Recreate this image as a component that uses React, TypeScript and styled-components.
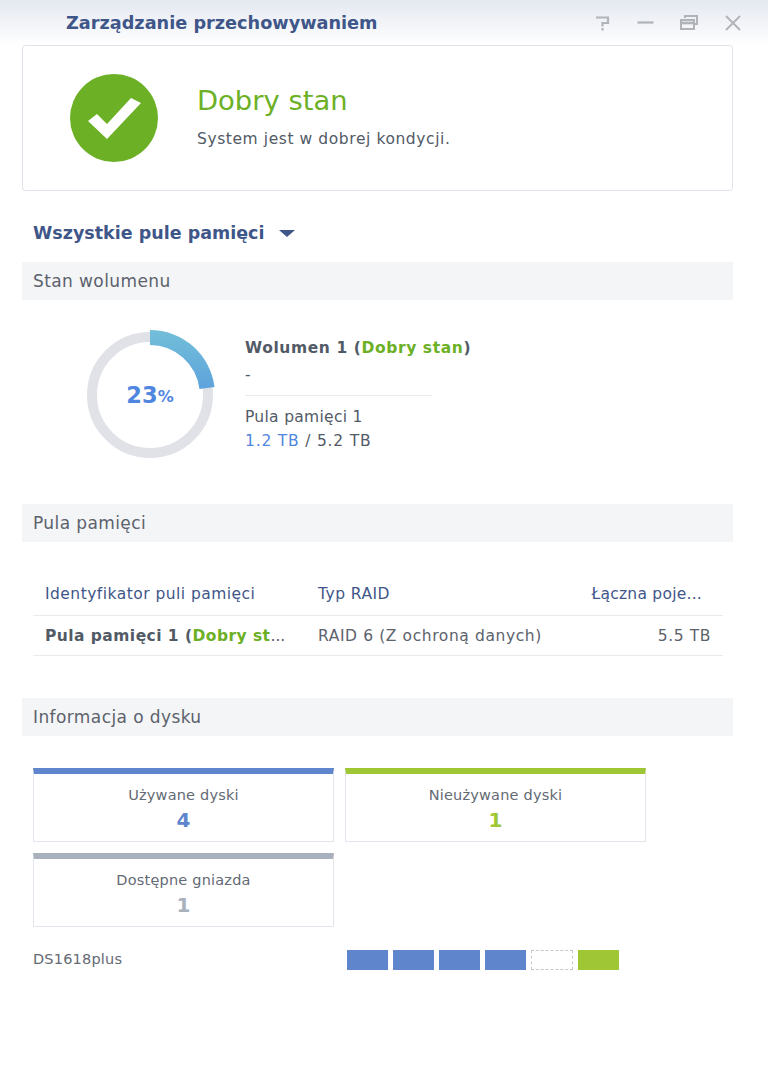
import styled, { createGlobalStyle } from 'styled-components';

const GlobalStyle = createGlobalStyle`
  html, body {
    margin: 0;
    padding: 0;
    background: #fff;
  }
  body {
    font-family: 'DejaVu Sans', Verdana, sans-serif;
    color: #525a66;
  }
`;

const drives = ['used', 'used', 'used', 'used', 'empty', 'free'] as const;

const colors = {
  blue: '#5f86cc',
  green: '#9fc634',
  gray: '#a9b1bd',
};

const App = () => {
  return (
    <Window>
      <GlobalStyle />
      <TitleBar>
        <AppTitle>Zarządzanie przechowywaniem</AppTitle>
        <WindowButtons>
          <svg width="18" height="18" viewBox="0 0 18 18" fill="none" stroke="#b0b3b8" strokeWidth="2.2">
            <path d="M4 3.5h12v5.5h-5.5v3.5" />
            <path d="M10.5 14v2.5" />
          </svg>
          <svg width="18" height="18" viewBox="0 0 18 18" fill="none" stroke="#b0b3b8" strokeWidth="2.2">
            <path d="M1.5 8.5h16" />
          </svg>
          <svg width="18" height="18" viewBox="0 0 18 18" fill="none" stroke="#b0b3b8" strokeWidth="2">
            <path d="M5 4V2h12v8h-3" />
            <path d="M1 6h13v9H1z" />
            <path d="M1 9h13" strokeWidth="2.6" />
          </svg>
          <svg width="18" height="18" viewBox="0 0 18 18" fill="none" stroke="#b0b3b8" strokeWidth="1.8">
            <path d="M2 2l14 14M16 2L2 16" />
          </svg>
        </WindowButtons>
      </TitleBar>

      <StatusCard>
        <svg width="88" height="88" viewBox="0 0 88 88">
          <circle cx="44" cy="44" r="44" fill="#6cb026" />
          <path d="M18 47l9-7 10 10 24-26 10 5-34 36z" fill="#fff" />
        </svg>
        <StatusText>
          <StatusTitle>Dobry stan</StatusTitle>
          <StatusNote>System jest w dobrej kondycji.</StatusNote>
        </StatusText>
      </StatusCard>

      <PoolSelect>
        Wszystkie pule pamięci
        <Caret />
      </PoolSelect>

      <SectionBar>Stan wolumenu</SectionBar>
      <VolumeRow>
        <Donut>
          <svg width="132" height="132" viewBox="0 0 132 132">
            <defs>
              <linearGradient id="arc" x1="0" y1="0" x2="0" y2="1">
                <stop offset="0" stopColor="#72bfd9" />
                <stop offset="1" stopColor="#5ea3dc" />
              </linearGradient>
            </defs>
            <circle cx="66" cy="66" r="58" fill="none" stroke="#e0e2e7" strokeWidth="10" />
            <path d="M66 1A65 65 0 0 1 130.5 58L115.5 60A50 50 0 0 0 66 16z" fill="url(#arc)" />
          </svg>
          <DonutLabel>
            23<small>%</small>
          </DonutLabel>
        </Donut>
        <VolumeInfo>
          <VolumeName>
            Wolumen 1 (<GreenText>Dobry stan</GreenText>)
          </VolumeName>
          <VolumeDash>-</VolumeDash>
          <VolumeDivider />
          <PoolLine>Pula pamięci 1</PoolLine>
          <UsageLine>
            <BlueText>1.2 TB</BlueText> / 5.2 TB
          </UsageLine>
        </VolumeInfo>
      </VolumeRow>

      <SectionBar>Pula pamięci</SectionBar>
      <PoolTable>
        <HeadRow>
          <span>Identyfikator puli pamięci</span>
          <span>Typ RAID</span>
          <CapacityHead>Łączna poje...</CapacityHead>
        </HeadRow>
        <BodyRow>
          <PoolName>
            Pula pamięci 1 (<GreenText>Dobry st</GreenText>
            <Dots>...</Dots>
          </PoolName>
          <span>RAID 6 (Z ochroną danych)</span>
          <CapacityCell>5.5 TB</CapacityCell>
        </BodyRow>
      </PoolTable>

      <SectionBar>Informacja o dysku</SectionBar>
      <DiskGrid>
        <DiskCard $color={colors.blue}>
          <DiskLabel>Używane dyski</DiskLabel>
          <DiskCount $color={colors.blue}>4</DiskCount>
        </DiskCard>
        <DiskCard $color={colors.green}>
          <DiskLabel>Nieużywane dyski</DiskLabel>
          <DiskCount $color={colors.green}>1</DiskCount>
        </DiskCard>
        <DiskCard $color={colors.gray}>
          <DiskLabel>Dostępne gniazda</DiskLabel>
          <DiskCount $color={colors.gray}>1</DiskCount>
        </DiskCard>
      </DiskGrid>

      <DeviceRow>
        <DeviceName>DS1618plus</DeviceName>
        <Bays>
          {drives.map((d, i) => (
            <Bay key={i} $kind={d} />
          ))}
        </Bays>
      </DeviceRow>
    </Window>
  );
};

export default App;

const Window = styled.div`
  width: 768px;
  height: 1089px;
  background: #fff;
  overflow: hidden;
`;

const TitleBar = styled.div`
  height: 45px;
  box-sizing: border-box;
  padding: 0 26px 0 66px;
  display: flex;
  align-items: center;
  justify-content: space-between;
  background: linear-gradient(#e4e8f0, #fff);
`;

const AppTitle = styled.div`
  font-size: 17.7px;
  font-weight: 700;
  color: #3f5689;
`;

const WindowButtons = styled.div`
  display: flex;
  gap: 26px;
  align-items: center;
`;

const StatusCard = styled.div`
  margin: 0 35px 0 22px;
  height: 146px;
  box-sizing: border-box;
  border: 1px solid #dfe3ea;
  border-radius: 3px;
  padding-left: 47px;
  display: flex;
  align-items: center;
  gap: 39px;
`;

const StatusText = styled.div`
  display: flex;
  flex-direction: column;
  margin-top: -3px;
`;

const StatusTitle = styled.div`
  font-size: 27.4px;
  line-height: 32px;
  color: #6cb026;
  margin-bottom: 12px;
`;

const StatusNote = styled.div`
  font-size: 15.5px;
  letter-spacing: 0.58px;
  line-height: 20px;
  color: #525a66;
`;

const PoolSelect = styled.div`
  margin: 30px 0 17px 33px;
  height: 24px;
  display: flex;
  align-items: center;
  gap: 15px;
  font-size: 17.5px;
  font-weight: 700;
  color: #3f5689;
`;

const Caret = styled.span`
  width: 0;
  height: 0;
  border-left: 8px solid transparent;
  border-right: 8px solid transparent;
  border-top: 7px solid #3f5689;
`;

const SectionBar = styled.div`
  margin: 0 35px 0 22px;
  height: 38px;
  box-sizing: border-box;
  padding-left: 11px;
  display: flex;
  align-items: center;
  background: #f4f5f7;
  font-size: 17px;
  letter-spacing: 0.4px;
  color: #5c626c;
`;

const VolumeRow = styled.div`
  height: 204px;
  box-sizing: border-box;
  padding: 29px 0 0 84px;
  display: flex;
  gap: 29px;
`;

const Donut = styled.div`
  position: relative;
  width: 132px;
  height: 132px;
`;

const DonutLabel = styled.div`
  position: absolute;
  inset: 0;
  display: flex;
  align-items: center;
  justify-content: center;
  font-size: 22.5px;
  font-weight: 700;
  color: #4f86e0;

  small {
    font-size: 16px;
    margin-top: 3px;
  }
`;

const VolumeInfo = styled.div`
  width: 187px;
  padding-top: 9px;
  display: flex;
  flex-direction: column;
`;

const VolumeName = styled.div`
  font-size: 15.5px;
  letter-spacing: 0.6px;
  font-weight: 700;
  line-height: 20px;
  white-space: nowrap;
`;

const VolumeDash = styled.div`
  font-size: 15.5px;
  line-height: 20px;
  margin-top: 7px;
`;

const VolumeDivider = styled.div`
  height: 1px;
  background: #e8eaee;
  margin: 10px 0 9px;
`;

const PoolLine = styled.div`
  font-size: 15.5px;
  letter-spacing: 0.3px;
  line-height: 24px;
  white-space: nowrap;
`;

const UsageLine = styled(PoolLine)`
  letter-spacing: 0.8px;
`;

const GreenText = styled.span`
  color: #6cb026;
`;

const BlueText = styled.span`
  color: #4f86e0;
`;

const PoolTable = styled.div`
  margin: 0 45px 0 33px;
  height: 156px;
  box-sizing: border-box;
  padding-top: 31px;
`;

const HeadRow = styled.div`
  height: 43px;
  box-sizing: border-box;
  padding: 0 12px;
  display: grid;
  grid-template-columns: 273px 1fr auto;
  align-items: center;
  border-bottom: 1px solid #e8eaee;
  font-size: 15.5px;
  letter-spacing: 0.47px;
  color: #3f5689;
`;

const BodyRow = styled(HeadRow)`
  height: 40px;
  color: #5c626c;
  letter-spacing: 0.6px;
`;

const PoolName = styled.span`
  white-space: nowrap;
  font-weight: 700;
  letter-spacing: 0.45px;
  color: #525a66;
`;

const Dots = styled.span`
  font-weight: 400;
  letter-spacing: 0;
`;

const CapacityHead = styled.span`
  text-align: right;
  padding-right: 9px;
  letter-spacing: 0.25px;
`;

const CapacityCell = styled.span`
  text-align: right;
`;

const DiskGrid = styled.div`
  margin: 32px 0 0 33px;
  display: grid;
  grid-template-columns: 301px 301px;
  gap: 11px 11px;
`;

const DiskCard = styled.div<{ $color: string }>`
  height: 74px;
  box-sizing: border-box;
  border: 1px solid #e2e5ec;
  border-top: 6px solid ${(p) => p.$color};
  display: flex;
  flex-direction: column;
  align-items: center;
  padding-top: 11px;
`;

const DiskLabel = styled.div`
  font-size: 14.5px;
  letter-spacing: 0.2px;
  line-height: 20px;
  color: #646a74;
`;

const DiskCount = styled.div<{ $color: string }>`
  font-size: 20px;
  font-weight: 700;
  line-height: 26px;
  margin-top: 2px;
  color: ${(p) => p.$color};
`;

const DeviceRow = styled.div`
  margin: 23px 0 0 33px;
  height: 20px;
  display: flex;
  align-items: center;
`;

const DeviceName = styled.div`
  width: 314px;
  font-size: 14.5px;
  letter-spacing: 0.2px;
  margin-top: -2px;
  color: #646a74;
`;

const Bays = styled.div`
  display: flex;
  gap: 5px;
`;

const bayColor = { used: colors.blue, free: colors.green, empty: '#fff' };

const Bay = styled.div<{ $kind: 'used' | 'free' | 'empty' }>`
  width: ${(p) => (p.$kind === 'empty' ? '42px' : '41px')};
  height: 20px;
  box-sizing: border-box;
  background: ${(p) => bayColor[p.$kind]};
  border: ${(p) => (p.$kind === 'empty' ? '1px dashed #c4c8cf' : 'none')};
`;
